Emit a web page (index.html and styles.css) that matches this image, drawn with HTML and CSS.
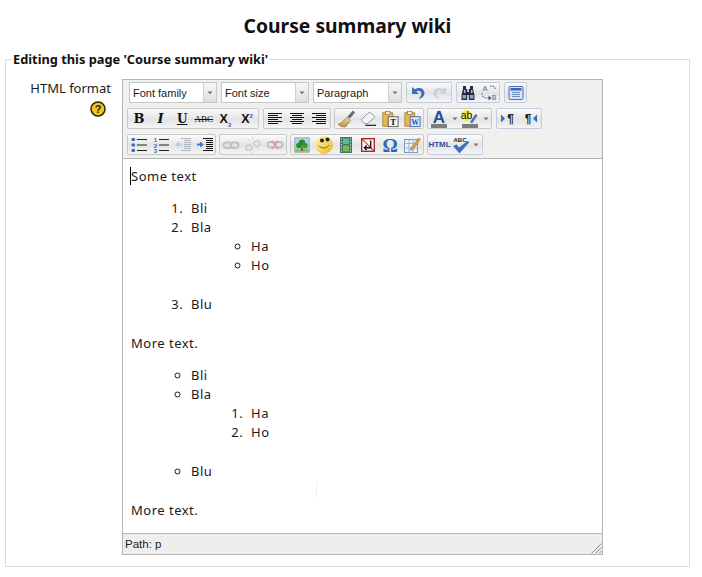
FILE: index.html
```html
<!DOCTYPE html>
<html lang="en">
<head>
<meta charset="utf-8">
<title>Course summary wiki</title>
<link rel="stylesheet" href="styles.css">
</head>
<body>
<svg class="sprites" width="0" height="0" aria-hidden="true">
  <defs>
    <linearGradient id="gSmile" x1="0" y1="0" x2="1" y2="1"><stop offset="0" stop-color="#fff6b0"/><stop offset="1" stop-color="#e8b820"/></linearGradient>
    <linearGradient id="gBrush" x1="0" y1="0" x2="0" y2="1"><stop offset="0" stop-color="#e8d9a8"/><stop offset="1" stop-color="#b8913f"/></linearGradient>
    <symbol id="i-undo" viewBox="0 0 20 20"><path d="M4 4v7h7L8.300 8.400c2.200-1.400 5-.4 5 2.300 0 2-1.200 3.800-3 5.300 4-.6 6.200-3.200 6.200-6 0-4.200-5.500-6.400-9.500-3.700z" fill="currentColor"/></symbol>
    <symbol id="i-redo" viewBox="0 0 20 20"><path d="M16 4v7H9l2.700-2.600c-2.200-1.400-5-.4-5 2.300 0 2 1.200 3.800 3 5.300-4-.6-6.200-3.200-6.200-6 0-4.200 5.500-6.400 9.500-3.700z" fill="currentColor"/></symbol>
    <symbol id="i-find" viewBox="0 0 20 20"><path d="M5 3h3v3h1.200v3h1.600V6H12V3h3v3l1.500 6v5h-5.700v-5H9.200v5H3.500v-5L5 6z" fill="#252c40"/><rect x="4.500" y="12" width="3.500" height="3.500" fill="#8fa6d0"/><rect x="12" y="12" width="3.500" height="3.500" fill="#8fa6d0"/><rect x="6" y="7" width="1.500" height="3" fill="#a9bcdc"/><rect x="13" y="7" width="1.500" height="3" fill="#a9bcdc"/></symbol>
    <symbol id="i-replace" viewBox="0 0 20 20"><text x="6" y="8" class="t-a">A</text><text x="15" y="17" class="t-a">B</text><path d="M3 10c0 3 1.500 5 5 5h2M11 3c3 0 5 0 5 3" fill="none" stroke="#4f74b8" stroke-width="1.200" stroke-dasharray="1.500 1.200"/><path d="M9.500 12.500v5l3-2.500z" fill="#2f58a8"/></symbol>
    <symbol id="i-full" viewBox="0 0 20 20"><rect x="3" y="3.500" width="14" height="13" rx="1" fill="#d8e4f6" stroke="#4c72b4"/><rect x="4.500" y="5" width="11" height="2.500" fill="#3d66ae"/><path d="M6 9.500h8M6 11.500h8M6 13.500h8" stroke="#6f90c6"/></symbol>
    <symbol id="i-left" viewBox="0 0 20 20"><path d="M3 4.500h14M3 6.500h10M3 8.500h14M3 10.500h10M3 12.500h14M3 14.500h10" stroke="#111" fill="none"/></symbol>
    <symbol id="i-center" viewBox="0 0 20 20"><path d="M3 4.500h14M5 6.500h10M3 8.500h14M5 10.500h10M3 12.500h14M5 14.500h10" stroke="#111" fill="none"/></symbol>
    <symbol id="i-right" viewBox="0 0 20 20"><path d="M3 4.500h14M7 6.500h10M3 8.500h14M7 10.500h10M3 12.500h14M7 14.500h10" stroke="#111" fill="none"/></symbol>
    <symbol id="i-clean" viewBox="0 0 20 20"><path d="M11 8l3.500 3.500-5 6.500c-3 0-6.500-1-7.500-3 2.500 0 5-2.500 9-7z" fill="url(#gBrush)" stroke="#8a6a2a" stroke-width=".6"/><path d="M11.500 7.500L17 1.500l2 2-5 6z" fill="#5c6b80"/></symbol>
    <symbol id="i-eraser" viewBox="0 0 20 20"><path d="M2.500 11L10 3.500c1-.8 2.200-.8 3.200 0l3.300 2.800c.8.900.8 2 0 2.800L9.500 15H6z" fill="#f2f5fa" stroke="#7f8ea3"/><path d="M7 17h12" stroke="#111" stroke-width="1.300"/></symbol>
    <symbol id="i-ptext" viewBox="0 0 20 20"><path d="M2 3h11v15H2z" fill="#e6b84e" stroke="#9a7426" stroke-width=".8"/><rect x="5" y="1.500" width="5" height="3.500" fill="#fff3c8" stroke="#7a6a3a" stroke-width=".7"/><rect x="8" y="7.500" width="11" height="11" fill="#f4f4f4" stroke="#555"/><text x="13.500" y="16.500" class="t-p">T</text></symbol>
    <symbol id="i-pword" viewBox="0 0 20 20"><path d="M2 3h11v15H2z" fill="#e6b84e" stroke="#9a7426" stroke-width=".8"/><rect x="5" y="1.500" width="5" height="3.500" fill="#fff3c8" stroke="#7a6a3a" stroke-width=".7"/><rect x="8" y="7.500" width="11" height="11" fill="#dfe8f8" stroke="#3f62a8"/><text x="13.500" y="16.500" class="t-w">W</text></symbol>
    <symbol id="i-color" viewBox="0 0 20 20"><text x="10" y="14" class="t-color">A</text><rect x="2" y="15" width="16" height="4" fill="#7c7c7c"/></symbol>
    <symbol id="i-hilite" viewBox="0 0 20 20"><circle cx="6.500" cy="6.500" r="5.500" fill="#f5ea5a"/><text x="6.500" y="10" class="t-ab">ab</text><path d="M10 13l5.500-8 2 1.500-5.500 8z" fill="#4c6fae"/><rect x="2" y="15" width="16" height="4" fill="#7c7c7c"/></symbol>
    <symbol id="i-ltr" viewBox="0 0 20 20"><path d="M3 5.500l4 4-4 4z" fill="#2f6fd0"/><text x="12.500" y="14" class="t-pil">¶</text></symbol>
    <symbol id="i-rtl" viewBox="0 0 20 20"><text x="8" y="14" class="t-pil">¶</text><path d="M17 5.500l-4 4 4 4z" fill="#2f6fd0"/></symbol>
    <symbol id="i-ul" viewBox="0 0 20 20"><g fill="#3a69bd"><rect x="2.500" y="3" width="3.500" height="3" rx="1"/><rect x="2.500" y="8.500" width="3.500" height="3" rx="1"/><rect x="2.500" y="14" width="3.500" height="3" rx="1"/></g><path d="M8 4.500h10M8 10h10M8 15.500h10" stroke="#222"/></symbol>
    <symbol id="i-ol" viewBox="0 0 20 20"><text x="4.500" y="7" class="t-n">1</text><text x="4.500" y="12.500" class="t-n">2</text><text x="4.500" y="18" class="t-n">3</text><path d="M8 4.500h10M8 10h10M8 15.500h10" stroke="#222"/></symbol>
    <symbol id="i-out" viewBox="0 0 20 20"><path d="M8 3.500h10M11 5.500h7M11 7.500h7M11 9.500h7M11 11.500h7M11 13.500h7M8 15.500h10" stroke="#b4b8be"/><path d="M2 9.500l4-3v2h3v2H6v2z" fill="#b8cbe8"/></symbol>
    <symbol id="i-in" viewBox="0 0 20 20"><path d="M8 3.500h10M11 5.500h7M11 7.500h7M11 9.500h7M11 11.500h7M11 13.500h7M8 15.500h10" stroke="#111"/><path d="M9 9.500l-4-3v2H2v2h3v2z" fill="#3a78d8"/></symbol>
    <symbol id="i-link" viewBox="0 0 20 20"><g fill="none" stroke="#bcc1c9" stroke-width="1.800"><rect x="2.500" y="7.500" width="8" height="5.500" rx="2.700"/><rect x="9.500" y="7.500" width="8" height="5.500" rx="2.700"/></g></symbol>
    <symbol id="i-unlink" viewBox="0 0 20 20"><g fill="none" stroke="#c6cbd2" stroke-width="1.500"><rect x="3" y="10" width="6" height="5" rx="2.500"/><rect x="11" y="6" width="6" height="5" rx="2.500"/><path d="M10 1v4M4 3l3 3M16 15l-3-3M10 16v3" stroke-width=".8"/></g></symbol>
    <symbol id="i-anchor" viewBox="0 0 20 20"><g fill="none" stroke="#bdbdc2" stroke-width="1.800"><rect x="2.500" y="7" width="8" height="5.500" rx="2.700"/><rect x="9.500" y="7" width="8" height="5.500" rx="2.700"/></g><path d="M7 6l6 8M13 6l-6 8" stroke="#e0a0a0" stroke-width="1.800"/></symbol>
    <symbol id="i-image" viewBox="0 0 20 20"><rect x="2" y="2" width="16" height="16" fill="#a9d6ea" stroke="#94a4ad"/><path d="M2.500 14h15v3.500h-15z" fill="#8ec34f"/><circle cx="10" cy="7.500" r="3.500" fill="#2f8a2a"/><circle cx="6.500" cy="10.500" r="3" fill="#2f8a2a"/><circle cx="13.500" cy="10.500" r="3" fill="#3d9a35"/><rect x="9" y="12" width="2" height="4.500" fill="#7c5324"/></symbol>
    <symbol id="i-smile" viewBox="0 0 20 20"><circle cx="10" cy="10" r="9" fill="url(#gSmile)"/><circle cx="8" cy="5.500" r="2" fill="#222"/><circle cx="13.500" cy="4.500" r="2" fill="#222"/><path d="M5 10.500c2 3.500 7 3.500 10-.5" fill="none" stroke="#8a6a10"/></symbol>
    <symbol id="i-movie" viewBox="0 0 20 20"><rect x="4" y="2" width="12" height="16" fill="#4f6f64"/><rect x="7" y="3.500" width="6" height="5.500" fill="#4fc0a8"/><rect x="7" y="10.500" width="6" height="6" fill="#6fbf50"/><path d="M5.500 3v14M14.500 3v14" stroke="#c8d4d0" stroke-dasharray="1.500 1.500"/></symbol>
    <symbol id="i-nbsp" viewBox="0 0 20 20"><rect x="3" y="3" width="14" height="14" fill="#fafafa" stroke="#b02020" stroke-width="1.500"/><path d="M3.500 3.500l13 13" stroke="#c83030" stroke-width="1.200"/><path d="M13 5v8H6M8.500 10.500L6 13l2.500 2.500" fill="none" stroke="#111" stroke-width="1.500"/></symbol>
    <symbol id="i-omega" viewBox="0 0 20 20"><text x="10" y="16.500" class="t-omega">Ω</text></symbol>
    <symbol id="i-table" viewBox="0 0 20 20"><rect x="2.500" y="4.500" width="13" height="13" fill="#eef3fa" stroke="#7a96c2"/><path d="M2.500 8.500h13M2.500 13h13M7 4.500v13M11 4.500v13" stroke="#9db2d3"/><path d="M9 13l7.500-10 2 1.500L11 14.500 8.500 15.500z" fill="#d9a54a" stroke="#8a6a2a" stroke-width=".5"/></symbol>
    <symbol id="i-spell" viewBox="0 0 20 20"><text x="9" y="7" class="t-abc">ABC</text><path d="M2 11l3.500-1.500 2.500 3L16.500 6l2 1L8.500 18.500z" fill="#3e6fc4"/></symbol>
    <symbol id="i-arrow" viewBox="0 0 10 20"><path d="M2.500 9h5L5 12z" fill="#777"/></symbol>
    <symbol id="i-help" viewBox="0 0 16 16"><circle cx="8" cy="8" r="7" fill="#f5c518" stroke="#2a2200" stroke-width="1.500"/><text x="8" y="12" class="t-help">?</text></symbol>
  </defs>
</svg>

<h1 class="title">Course summary wiki</h1>

<fieldset class="box">
  <legend class="box-legend">Editing this page 'Course summary wiki'</legend>
  <div class="field">
    <div class="field-label">
      <span>HTML format</span>
      <svg class="help" aria-label="Help"><use href="#i-help"/></svg>
    </div>
    <div class="editor">
      <div class="toolbar">
        <div class="row row-top">
          <div class="select"><span class="select-text">Font family</span><span class="select-btn"><svg class="arr"><use href="#i-arrow"/></svg></span></div>
          <div class="select"><span class="select-text">Font size</span><span class="select-btn"><svg class="arr"><use href="#i-arrow"/></svg></span></div>
          <div class="select select-wide"><span class="select-text">Paragraph</span><span class="select-btn"><svg class="arr"><use href="#i-arrow"/></svg></span></div>
          <div class="group blue w46"><span class="btn"><svg class="ico c-undo"><use href="#i-undo"/></svg></span><span class="btn"><svg class="ico c-redo"><use href="#i-redo"/></svg></span></div>
          <div class="group blue w44"><span class="btn"><svg class="ico"><use href="#i-find"/></svg></span><span class="btn"><svg class="ico"><use href="#i-replace"/></svg></span></div>
          <div class="group blue w23"><span class="btn"><svg class="ico"><use href="#i-full"/></svg></span></div>
        </div>
        <div class="row">
          <div class="group w132">
            <span class="btn glyph g-b">B</span>
            <span class="btn glyph g-i">I</span>
            <span class="btn glyph g-u">U</span>
            <span class="btn glyph g-s">ABC</span>
            <span class="btn glyph g-x"><span>X<sub class="sub">2</sub></span></span>
            <span class="btn glyph g-x"><span>X<sup class="sup">2</sup></span></span>
          </div>
          <div class="group w68 mg"><span class="btn"><svg class="ico"><use href="#i-left"/></svg></span><span class="btn"><svg class="ico"><use href="#i-center"/></svg></span><span class="btn"><svg class="ico"><use href="#i-right"/></svg></span></div>
          <div class="group w90"><span class="btn"><svg class="ico"><use href="#i-clean"/></svg></span><span class="btn"><svg class="ico ico-s"><use href="#i-eraser"/></svg></span><span class="btn"><svg class="ico ico-s"><use href="#i-ptext"/></svg></span><span class="btn"><svg class="ico ico-s"><use href="#i-pword"/></svg></span></div>
          <div class="group w65"><span class="btn"><svg class="ico"><use href="#i-color"/></svg></span><span class="drop"><svg class="arr"><use href="#i-arrow"/></svg></span><span class="btn"><svg class="ico"><use href="#i-hilite"/></svg></span><span class="drop"><svg class="arr"><use href="#i-arrow"/></svg></span></div>
          <div class="group blue w46 mg"><span class="btn"><svg class="ico"><use href="#i-ltr"/></svg></span><span class="btn"><svg class="ico"><use href="#i-rtl"/></svg></span></div>
        </div>
        <div class="row">
          <div class="group w89"><span class="btn"><svg class="ico"><use href="#i-ul"/></svg></span><span class="btn"><svg class="ico"><use href="#i-ol"/></svg></span><span class="btn"><svg class="ico"><use href="#i-out"/></svg></span><span class="btn"><svg class="ico"><use href="#i-in"/></svg></span></div>
          <div class="group w68"><span class="btn"><svg class="ico"><use href="#i-link"/></svg></span><span class="btn"><svg class="ico"><use href="#i-unlink"/></svg></span><span class="btn"><svg class="ico"><use href="#i-anchor"/></svg></span></div>
          <div class="group w134"><span class="btn"><svg class="ico ico-s"><use href="#i-image"/></svg></span><span class="btn"><svg class="ico"><use href="#i-smile"/></svg></span><span class="btn"><svg class="ico"><use href="#i-movie"/></svg></span><span class="btn"><svg class="ico ico-s"><use href="#i-nbsp"/></svg></span><span class="btn"><svg class="ico"><use href="#i-omega"/></svg></span><span class="btn"><svg class="ico"><use href="#i-table"/></svg></span></div>
          <div class="group blue w56"><span class="btn glyph g-html">HTML</span><span class="btn"><svg class="ico"><use href="#i-spell"/></svg></span><span class="drop"><svg class="arr"><use href="#i-arrow"/></svg></span></div>
        </div>
      </div>
      <div class="content">
        <span class="caret"></span>
        <span class="ibeam"></span>
        <p class="para">Some text</p>
        <ol class="list">
          <li>Bli</li>
          <li>Bla
            <ul class="sublist"><li>Ha</li><li>Ho</li></ul>
          </li>
          <li>Blu</li>
        </ol>
        <p class="para">More text.</p>
        <ul class="list">
          <li>Bli</li>
          <li>Bla
            <ol class="sublist"><li>Ha</li><li>Ho</li></ol>
          </li>
          <li>Blu</li>
        </ul>
        <p class="para">More text.</p>
      </div>
      <div class="status">
        <span>Path: p</span>
        <svg class="grip" viewBox="0 0 12 12" aria-hidden="true"><path d="M11.500 1.500l-10 10M11.500 5.500l-6 6M11.500 9l-2.500 2.500" stroke="#8a8a8a" fill="none"/></svg>
      </div>
    </div>
  </div>
</fieldset>
</body>
</html>
```
FILE: styles.css
```css
* { box-sizing: border-box; }
html, body { margin: 0; padding: 0; }
body {
  background: #fff;
  color: #1a1a1a;
  font-family: "Noto Sans", "DejaVu Sans", sans-serif;
  font-size: 13px;
  width: 702px;
  height: 577px;
  overflow: hidden;
}
.sprites { display: block; height: 0; }
.title {
  margin: 0;
  padding: 12px 7px 0 0;
  height: 51px;
  text-align: center;
  font-size: 19.300px;
  line-height: 28px;
  font-weight: 700;
  color: #111;
}
.box {
  margin: 0 0 0 5px;
  padding: 0;
  width: 685px;
  height: 516px;
  border: 1px solid #dcdcdc;
  min-width: 0;
}
.box-legend {
  margin-left: 6px;
  padding: 0 1px;
  font-size: 12.800px;
  line-height: 16px;
  font-weight: 700;
  color: #111;
}
.field { display: flex; padding-top: 12px; }
.field-label {
  width: 116px;
  padding: 0 11px 0 0;
  display: flex;
  flex-direction: column;
  align-items: flex-end;
  line-height: 18px;
  flex: none;
}
.help { width: 16px; height: 16px; margin-top: 4px; margin-right: 5px; display: block; }
.editor {
  width: 481px;
  height: 476px;
  border: 1px solid #b4b4b4;
  background: #f0f0ee;
  display: flex;
  flex-direction: column;
  font-family: "Liberation Sans", Arial, sans-serif;
  flex: none;
}
.toolbar {
  height: 79px;
  padding: 2px 0 0 4px;
  border-bottom: 1px solid #b4b4b4;
  display: flex;
  flex-direction: column;
  gap: 5px;
  flex: none;
}
.row { display: flex; gap: 3px; height: 21px; }
.row-top { padding-left: 2px; gap: 4px; }
.select {
  width: 88px;
  height: 21px;
  display: flex;
  background: #fff;
  border: 1px solid #c6c6c6;
  font-size: 11px;
}
.select-wide { width: 89px; }
.select-text { flex: 1; padding: 0 3px; line-height: 20px; color: #222; }
.select-btn {
  width: 13px;
  border-left: 1px solid #d0d0d0;
  background: linear-gradient(#f6f6f6, #dedede);
  display: flex;
  align-items: center;
  justify-content: center;
}
.arr { width: 10px; height: 19px; display: block; }
.group {
  display: flex;
  justify-content: center;
  height: 21px;
  border: 1px solid #c8c8c8;
  border-radius: 2px;
  background: linear-gradient(#fbfbfb, #e4e4e4 55%, #f4f4f4);
  flex: none;
}
.group.blue { border-color: #c2cee0; }
.mg { margin-left: 1px; }
.w23 { width: 23px; }
.w44 { width: 44px; }
.w46 { width: 46px; }
.w56 { width: 56px; }
.w65 { width: 65px; }
.w68 { width: 68px; }
.w89 { width: 89px; }
.w90 { width: 90px; }
.w132 { width: 132px; }
.w134 { width: 134px; }
.btn {
  width: 22px;
  height: 19px;
  display: flex;
  align-items: center;
  justify-content: center;
  flex: none;
}
.w132 .btn, .w23 .btn { width: 21.600px; }
.w44 .btn { width: 21px; }
.drop { width: 10px; height: 19px; display: flex; align-items: center; justify-content: center; flex: none; }
.w65 .btn { width: 21.500px; }
.w56 .btn { width: 21px; }
.ico { width: 20px; height: 20px; display: block; flex: none; }
.ico-s { width: 18px; height: 18px; }
.c-undo { color: #3a6fc4; }
.c-redo { color: #c9d3e2; }
.glyph { font-family: "DejaVu Serif", serif; color: #111; }
.g-b { font-weight: 700; font-size: 13px; }
.g-i { font-weight: 700; font-style: italic; font-size: 13px; }
.g-u { font-weight: 700; font-size: 12px; text-decoration: underline; }
.g-s { font-family: "Liberation Serif", serif; font-size: 9px; text-decoration: line-through; }
.g-x { font-family: "Liberation Sans", sans-serif; font-weight: 700; font-size: 12.500px; }
.sub, .sup { font-size: 6px; color: #3a5ca8; line-height: 0; }
.g-html { font-family: "Liberation Sans", sans-serif; font-size: 8px; font-weight: 700; color: #2a4f9a; }
.content {
  flex: 1;
  background: #fff;
  padding: 8px 8px 0;
  font-family: "Noto Sans", "DejaVu Sans", sans-serif;
  font-size: 13px;
  letter-spacing: .5px;
  line-height: 19px;
  color: #1a1a1a;
  position: relative;
}
.para { margin: 0; }
.list { margin: 13px 0 20px; padding-left: 60px; }
.sublist { margin: 0 0 20px; padding-left: 60px; }
ul.list, ul.sublist { list-style: circle; }
ol.list > li::marker, ol.sublist > li::marker { content: counter(list-item) ".\00a0\00a0"; }
.caret {
  position: absolute;
  left: 7px;
  top: 8px;
  width: 1px;
  height: 18px;
  background: #000;
}
.ibeam {
  position: absolute;
  left: 191px;
  top: 323px;
  width: 5px;
  height: 15px;
  background: linear-gradient(#eee, #eee) center / 1px 100% no-repeat;
}
.status {
  height: 21px;
  border-top: 1px solid #b4b4b4;
  background: #eee;
  display: flex;
  align-items: center;
  justify-content: space-between;
  padding-left: 2px;
  font-size: 11.500px;
  color: #222;
  flex: none;
}
.grip { width: 12px; height: 12px; align-self: flex-end; display: block; }
.t-a { font: 7px "Liberation Sans", sans-serif; fill: #4f6a9a; text-anchor: middle; }
.t-p { font: 700 9.500px "Liberation Serif", serif; fill: #111; text-anchor: middle; }
.t-w { font: 700 8.500px "Liberation Serif", serif; fill: #2a55ad; text-anchor: middle; }
.t-color { font: 700 17px "Liberation Sans", sans-serif; fill: #2a4f9a; text-anchor: middle; }
.t-ab { font: 10.500px "Liberation Sans", sans-serif; fill: #111; text-anchor: middle; }
.t-pil { font: 700 12px "Liberation Sans", sans-serif; fill: #222; text-anchor: middle; }
.t-n { font: 700 6px "Liberation Sans", sans-serif; fill: #3a69bd; text-anchor: middle; }
.t-omega { font: 700 19px "Liberation Serif", serif; fill: #2d62bf; text-anchor: middle; }
.t-abc { font: 700 6px "Liberation Sans", sans-serif; fill: #222; text-anchor: middle; }
.t-help { font: 700 11px "Liberation Sans", sans-serif; fill: #222; text-anchor: middle; }
```
